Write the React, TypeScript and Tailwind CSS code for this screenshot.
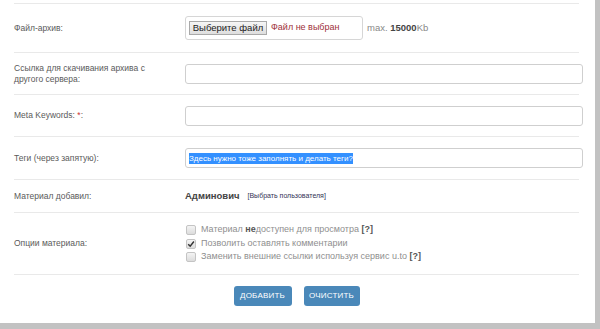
import React from 'react';

const labelCls = 'w-[171px] shrink-0 text-[8.5px] leading-[11px] text-[#5a5a5a]';
const inputCls =
  'h-[20px] w-[398px] shrink-0 rounded-[3px] border border-[#cfcfcf] bg-white px-[3px] text-[8px] outline-none';

function Row({ h, children }: { h: string; children: React.ReactNode }) {
  return <div className={`flex items-center border-t border-[#e9e9e9] ${h}`}>{children}</div>;
}

function Box({ checked }: { checked?: boolean }) {
  return (
    <span className="mr-[5px] flex h-[10px] w-[10px] shrink-0 items-center justify-center rounded-[2px] border border-[#c4c4c4] bg-gradient-to-b from-[#f4f4f4] to-[#dcdcdc]">
      {checked && (
        <svg viewBox="0 0 10 10" className="h-[8px] w-[8px]">
          <path d="M1.5 5.2 L4 7.8 L8.6 1.8" fill="none" stroke="#333" strokeWidth="1.8" />
        </svg>
      )}
    </span>
  );
}

export default function App() {
  return (
    <div
      className="h-[329px] w-[600px] overflow-hidden bg-[#c2c2c2]"
      style={{ fontFamily: '"Liberation Sans", Arial, sans-serif' }}
    >
      <div className="h-[323px] w-[595px] bg-white pt-[3px]">
        <div className="ml-[14px] w-[565px]">
          {/* Файл */}
          <Row h="h-[49px]">
            <div className={labelCls}>Файл-архив:</div>
            <div className="flex h-[24px] w-[178px] shrink-0 items-center whitespace-nowrap rounded-[3px] border border-[#d6d6d6] pl-[3px]">
              <span className="flex h-[14px] w-[78px] items-center justify-center border border-[#a9a9a9] bg-gradient-to-b from-[#f6f6f6] to-[#dedede] text-[9.5px] text-[#222]">
                Выберите файл
              </span>
              <span className="ml-[4px] text-[9px] text-[#a0303a]">Файл не выбран</span>
            </div>
            <div className="ml-[4px] whitespace-nowrap text-[9.5px] text-[#888]">
              max. <b className="text-[#444]">15000</b>Kb
            </div>
          </Row>

          {/* Ссылка */}
          <Row h="h-[42px]">
            <div className={labelCls}>
              Ссылка для скачивания архива с
              <br />
              другого сервера:
            </div>
            <input className={inputCls} />
          </Row>

          {/* Meta */}
          <Row h="h-[42px]">
            <div className={labelCls}>
              Meta Keywords: <span className="text-[#c33]">*</span>:
            </div>
            <input className={inputCls} />
          </Row>

          {/* Теги */}
          <Row h="h-[43px]">
            <div className={labelCls}>Теги (через запятую):</div>
            <div className={`${inputCls} flex items-center border-[#c8c8c8]`}>
              <span className="bg-[#3390ff] text-[8px] leading-[11px] text-white">
                Здесь нужно тоже заполнять и делать теги?
              </span>
            </div>
          </Row>

          {/* Автор */}
          <Row h="h-[33px]">
            <div className={labelCls}>Материал добавил:</div>
            <span className="text-[9.5px] font-bold text-[#444]">Админович</span>
            <span className="ml-[8px] text-[7px] text-[#335]">[Выбрать пользователя]</span>
          </Row>

          {/* Опции */}
          <div className="flex h-[63px] items-center border-y border-[#e9e9e9]">
            <div className={labelCls}>Опции материала:</div>
            <div className="flex flex-col pl-[1px] text-[9px] leading-[13.5px] text-[#8f8f8f]">
              <div className="flex items-center">
                <Box />
                <span>
                  Материал <b className="text-[#555]">не</b>доступен для просмотра{' '}
                  <b className="text-[#555]">[?]</b>
                </span>
              </div>
              <div className="flex items-center">
                <Box checked />
                <span>Позволить оставлять комментарии</span>
              </div>
              <div className="flex items-center">
                <Box />
                <span>
                  Заменить внешние ссылки используя сервис u.to <b className="text-[#555]">[?]</b>
                </span>
              </div>
            </div>
          </div>

          {/* Кнопки */}
          <div className="flex justify-center gap-[12px] pt-[11px]">
            <button className="h-[20px] w-[58px] rounded-[3px] bg-[#4a88b9] text-[8px] tracking-[0.2px] text-white">
              ДОБАВИТЬ
            </button>
            <button className="h-[20px] w-[56px] rounded-[3px] bg-[#4a88b9] text-[8px] tracking-[0.2px] text-white">
              ОЧИСТИТЬ
            </button>
          </div>
        </div>
      </div>
    </div>
  );
}
